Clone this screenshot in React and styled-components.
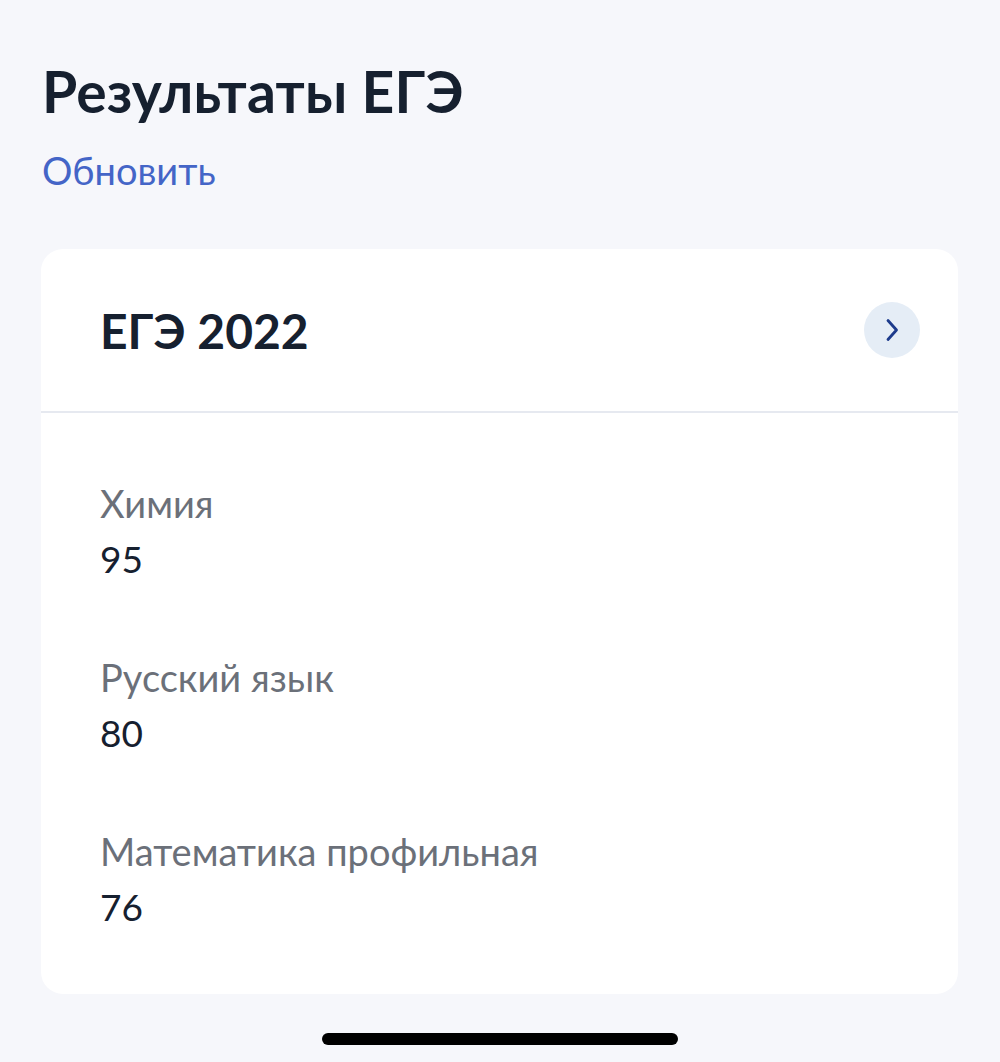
import React from 'react';
import styled, { createGlobalStyle } from 'styled-components';

const GlobalStyle = createGlobalStyle`
  html, body {
    margin: 0;
    padding: 0;
    background: #f6f7fb;
    font-family: Lato, "Noto Sans", sans-serif;
  }
`;

const results = [
  { subject: 'Химия', score: 95 },
  { subject: 'Русский язык', score: 80 },
  { subject: 'Математика профильная', score: 76 },
];

const App = () => {
  return (
    <>
      <GlobalStyle />
      <Page>
        <Title>Результаты ЕГЭ</Title>
        <Refresh>Обновить</Refresh>
        <Card>
          <CardHeader>
            <CardTitle>ЕГЭ 2022</CardTitle>
            <ArrowButton>
              <svg width="28" height="28" viewBox="0 0 28 28" fill="none">
                <path d="M10 4.5 L18.5 14 L10 23.5" stroke="#1d3b8c" strokeWidth="2.8" strokeLinecap="round" strokeLinejoin="round" />
              </svg>
            </ArrowButton>
          </CardHeader>
          <CardBody>
            {results.map((r) => (
              <Item key={r.subject}>
                <Label>{r.subject}</Label>
                <Score>{r.score}</Score>
              </Item>
            ))}
          </CardBody>
        </Card>
        <HomeBar />
      </Page>
    </>
  );
};

const Page = styled.div`
  padding: 53px 42px 0 41px;
  min-height: 1062px;
  box-sizing: border-box;
  display: flex;
  flex-direction: column;
`;

const Title = styled.h1`
  margin: 0 0 0 1px;
  font-size: 57px;
  line-height: 76px;
  font-weight: 700;
  color: #16202f;
  letter-spacing: 0.2px;
`;

const Refresh = styled.div`
  margin: 18px 0 0 1px;
  font-size: 38px;
  line-height: 46px;
  color: #4465c7;
`;

const Card = styled.div`
  margin-top: 56px;
  background: #ffffff;
  border-radius: 22px;
  overflow: hidden;
`;

const CardHeader = styled.div`
  height: 162px;
  display: flex;
  align-items: center;
  justify-content: space-between;
  padding: 0 38px 0 59px;
  border-bottom: 2px solid #e6e9f0;
`;

const CardTitle = styled.div`
  font-size: 48px;
  font-weight: 700;
  color: #16202f;
`;

const ArrowButton = styled.div`
  width: 56px;
  height: 56px;
  border-radius: 50%;
  background: #e5edf6;
  display: flex;
  align-items: center;
  justify-content: center;
`;

const CardBody = styled.div`
  padding: 62px 59px 59px;
  display: flex;
  flex-direction: column;
  gap: 62px;
`;

const Item = styled.div`
  display: flex;
  flex-direction: column;
`;

const Label = styled.div`
  font-size: 38px;
  line-height: 56px;
  color: #6b7079;
`;

const Score = styled.div`
  font-size: 37px;
  line-height: 56px;
  color: #16202f;
`;

const HomeBar = styled.div`
  margin: 39px auto 0;
  width: 356px;
  height: 12px;
  border-radius: 6px;
  background: #000;
`;

export default App;
